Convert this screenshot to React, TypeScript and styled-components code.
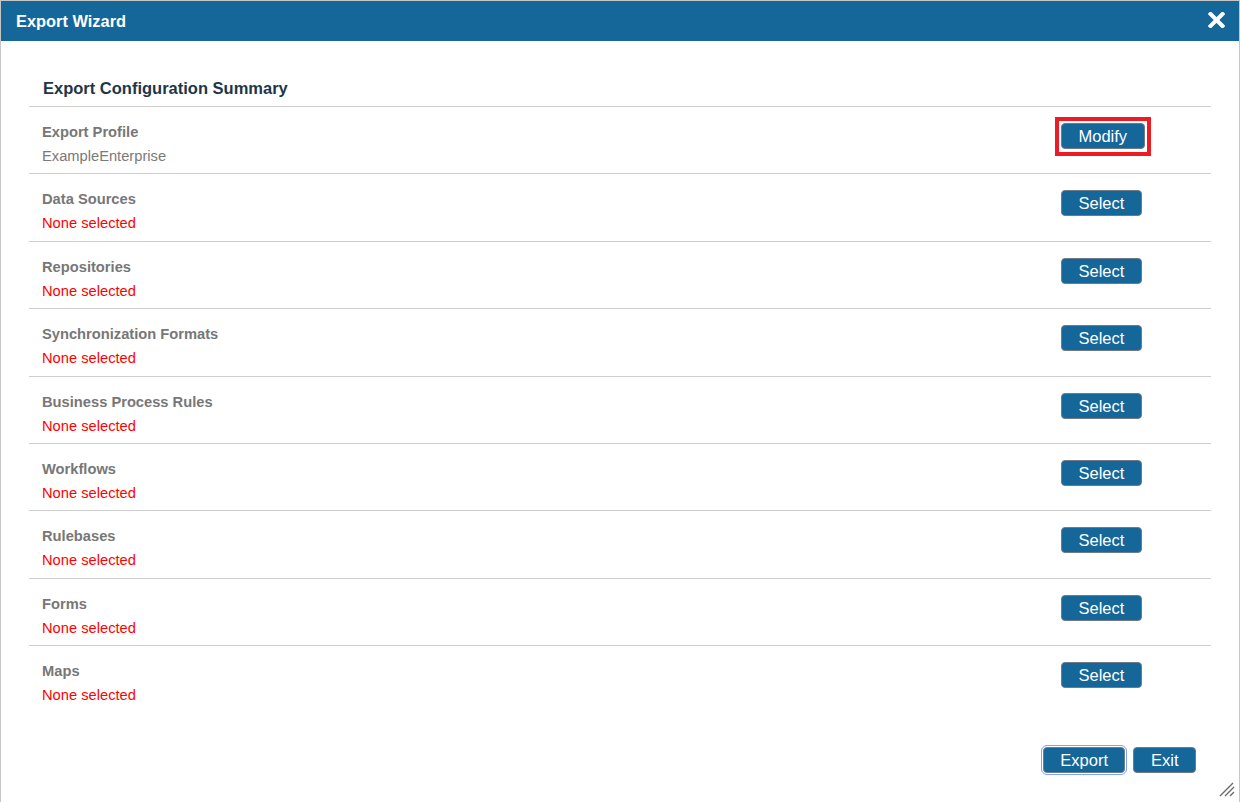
import styled, { createGlobalStyle } from 'styled-components'

const GlobalStyle = createGlobalStyle`
body {
    margin: 0;
    font-family: "Liberation Sans", Arial, sans-serif;
    background: #fff;
}
`

const sections = [
    { label: 'Export Profile', value: 'ExampleEnterprise', action: 'Modify', set: true },
    { label: 'Data Sources', value: 'None selected', action: 'Select' },
    { label: 'Repositories', value: 'None selected', action: 'Select' },
    { label: 'Synchronization Formats', value: 'None selected', action: 'Select' },
    { label: 'Business Process Rules', value: 'None selected', action: 'Select' },
    { label: 'Workflows', value: 'None selected', action: 'Select' },
    { label: 'Rulebases', value: 'None selected', action: 'Select' },
    { label: 'Forms', value: 'None selected', action: 'Select' },
    { label: 'Maps', value: 'None selected', action: 'Select' },
]

const App = () => {
    return (
        <>
            <GlobalStyle />
            <Dialog>
                <Header>
                    <Title>Export Wizard</Title>
                    <Close aria-label="Close">
                        <svg width="17" height="16" viewBox="0 0 17 16">
                            <path d="M2.5 2L14.5 14M14.5 2L2.5 14" stroke="#fff" strokeWidth="4" strokeLinecap="square" />
                        </svg>
                    </Close>
                </Header>
                <Content>
                    <Heading>Export Configuration Summary</Heading>
                    {sections.map((s) => (
                        <Row key={s.label}>
                            <Info>
                                <Label>{s.label}</Label>
                                <Value $set={s.set}>{s.value}</Value>
                            </Info>
                            <Action>
                                {s.action === 'Modify' ? (
                                    <Marker>
                                        <Button>{s.action}</Button>
                                    </Marker>
                                ) : (
                                    <Button>{s.action}</Button>
                                )}
                            </Action>
                        </Row>
                    ))}
                </Content>
                <Footer>
                    <Button $focused>Export</Button>
                    <Button>Exit</Button>
                </Footer>
                <Grip>
                    <svg width="16" height="15" viewBox="0 0 16 15">
                        <path d="M1 14L14 1M6 14L15 5M11 14L15 10" stroke="#6b6b6b" strokeWidth="1.4" />
                    </svg>
                </Grip>
            </Dialog>
        </>
    )
}

export default App;

const Dialog = styled.div`
position: relative;
width: 1240px;
height: 802px;
box-sizing: border-box;
border: 1px solid #c6c6c6;
border-bottom: none;
display: flex;
flex-direction: column;
background: #fff;
`
const Header = styled.div`
height: 40px;
background: #156699;
display: flex;
align-items: center;
justify-content: space-between;
padding: 0 14px 0 15px;
`
const Title = styled.h1`
margin: 0;
color: #fff;
font-size: 16.4px;
font-weight: bold;
`
const Close = styled.div`
display: flex;
margin-top: -2px;
`
const Content = styled.div`
padding: 0 28px;
`
const Heading = styled.h2`
margin: 37px 0 0;
padding: 0 14px 8px;
font-size: 16.5px;
line-height: 20px;
font-weight: bold;
color: #1f3548;
`
const Row = styled.div`
display: grid;
grid-template-columns: 1fr 150px;
height: 67.4px;
box-sizing: border-box;
border-top: 1px solid #cfcfcf;
padding: 17px 0 0 13px;
`
const Info = styled.div`
display: flex;
flex-direction: column;
`
const Label = styled.div`
font-size: 14.7px;
line-height: 17px;
font-weight: bold;
color: #777;
`
const Value = styled.div<{ $set?: boolean }>`
margin-top: 7px;
font-size: 14.7px;
line-height: 17px;
color: ${(p) => (p.$set ? '#7a7a7a' : '#ff0000')};
`
const Action = styled.div`
display: flex;
align-items: flex-start;
`
const Marker = styled.div`
display: flex;
margin: -7px 0 0 -6px;
padding: 3px 2px 3px 2px;
border: 4px solid #ed1c24;
`
const Button = styled.button<{ $focused?: boolean }>`
height: 26px;
margin-top: -1px;
padding: 0 16.5px;
border: 1px solid #6f7b86;
border-radius: 4px;
background: #156699;
color: #fff;
font-family: "Liberation Sans", Arial, sans-serif;
font-size: 16.5px;
line-height: 24px;
${(p) => p.$focused && `
outline: 1px solid #7aa3f2;
outline-offset: 1px;
`}
`
const Footer = styled.div`
margin-top: auto;
display: flex;
justify-content: flex-end;
gap: 8px;
padding: 0 43px 29px;
`
const Grip = styled.div`
position: absolute;
right: 4px;
bottom: 5px;
display: flex;
`
